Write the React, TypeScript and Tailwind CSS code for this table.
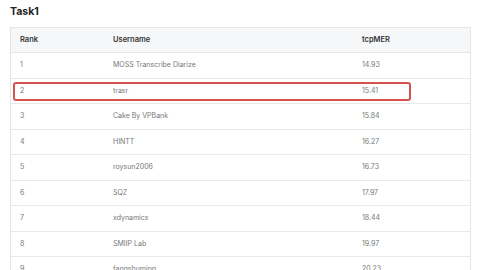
import React from "react";

const rows: [string, string, string][] = [
  ["1", "MOSS Transcribe Diarize", "14.93"],
  ["2", "trasr", "15.41"],
  ["3", "Cake By VPBank", "15.84"],
  ["4", "HINTT", "16.27"],
  ["5", "roysun2006", "16.73"],
  ["6", "SQZ", "17.97"],
  ["7", "xdynamics", "18.44"],
  ["8", "SMIIP Lab", "19.97"],
  ["9", "fangshuming", "20.23"],
];

export default function App() {
  return (
    <div
      className="w-[480px] h-[270px] overflow-hidden bg-white"
      style={{ fontFamily: "Inter, 'Noto Sans', sans-serif" }}
    >
      <div className="pt-[5px] pl-[10px] pr-[9px]">
        <h1 className="text-[10.5px] leading-[14px] font-bold text-[#222]">Task1</h1>
        <div className="relative mt-[8px] border border-[#e3e5e8]">
          <div className="grid grid-cols-[93px_249px_1fr] h-[25px] items-center bg-[#f6f7f9] border-b border-[#e3e5e8] text-[7.5px] font-semibold text-[#333]">
            <div className="pl-[9px]">Rank</div>
            <div className="pl-[9px]">Username</div>
            <div className="pl-[9px]">tcpMER</div>
          </div>
          {rows.map((r, i) => (
            <div
              key={i}
              className="grid grid-cols-[93px_249px_1fr] h-[25.5px] items-center border-b border-[#e8e9ec] text-[7px] text-[#777]"
            >
              <div className="pl-[9px]">{r[0]}</div>
              <div className="pl-[9px]">{r[1]}</div>
              <div className="pl-[9px]">{r[2]}</div>
            </div>
          ))}
          <div className="absolute left-[2px] top-[54px] w-[398px] h-[19px] rounded-[3px] border-2 border-[#d4534f]" />
        </div>
      </div>
    </div>
  );
}
